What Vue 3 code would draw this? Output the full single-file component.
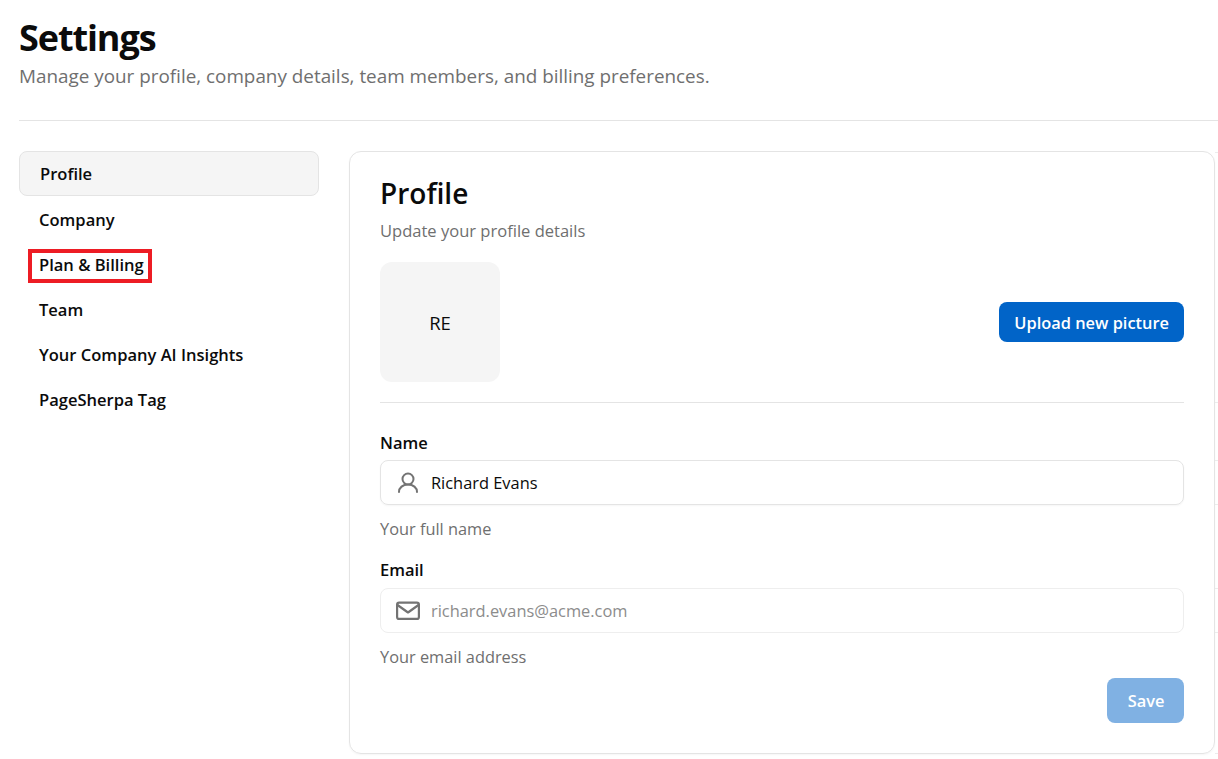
<template>
  <div class="page">
    <header class="head">
      <h1>Settings</h1>
      <p>Manage your profile, company details, team members, and billing preferences.</p>
    </header>

    <div class="body">
      <nav class="side">
        <a
          v-for="item in navItems"
          :key="item"
          class="nav-item"
          :class="{ active: item === 'Profile' }"
        >
          <span :class="{ marked: item === 'Plan & Billing' }">{{ item }}</span>
        </a>
      </nav>

      <section class="card">
        <h2>Profile</h2>
        <p class="lead">Update your profile details</p>

        <div class="avatar-row">
          <div class="avatar">RE</div>
          <button class="btn">Upload new picture</button>
        </div>

        <div class="field">
          <label>Name</label>
          <div class="input">
            <svg class="icon" width="24" height="24" viewBox="0 0 24 24" fill="none" stroke="#737373" stroke-width="2" stroke-linecap="round">
              <circle cx="12" cy="8" r="5.500" />
              <path d="M3 21c0-4.300 3.800-7.500 9-7.500s9 3.200 9 7.500" />
            </svg>
            <span>Richard Evans</span>
          </div>
          <p class="help">Your full name</p>
        </div>

        <div class="field">
          <label>Email</label>
          <div class="input disabled">
            <svg class="icon" width="24" height="24" viewBox="0 0 24 24" fill="none" stroke="#737373" stroke-width="2.200" stroke-linejoin="round">
              <rect x="1.100" y="3.600" width="21.800" height="16.300" rx="2" />
              <path d="M1.500 6l10.500 7.500L22.500 6" />
            </svg>
            <span>richard.evans@acme.com</span>
          </div>
          <p class="help">Your email address</p>
        </div>

        <div class="actions">
          <button class="btn save">Save</button>
        </div>
      </section>
    </div>

    <!-- stubs of a clipped layer showing past the card's right edge -->
    <i v-for="y in edgeTicks" :key="y" class="tick" :style="{ top: y + 'px' }"></i>
  </div>
</template>

<script setup>
const navItems = [
  "Profile",
  "Company",
  "Plan & Billing",
  "Team",
  "Your Company AI Insights",
  "PageSherpa Tag",
];

const edgeTicks = [152, 402, 460, 504, 588, 632, 753];
</script>

<style>
html,
body {
  background: #fff;
  overflow: hidden;
}
</style>

<style scoped>
.page {
  position: relative;
  height: 759px;
  box-sizing: border-box;
  padding: 13px 0 0 19px;
  font-family: "Open Sans", "Noto Sans", sans-serif;
  color: #0b0b0b;
}

.head {
  height: 108px;
  box-sizing: border-box;
  border-bottom: 1px solid #e4e4e4;
}

h1 {
  margin: 0;
  font-size: 36px;
  line-height: 49px;
  font-weight: 700;
  letter-spacing: -1.1px;
}

.head p {
  margin: 0;
  font-size: 18.88px;
  line-height: 28px;
  color: #6f6f6f;
}

.body {
  display: flex;
  gap: 30px;
  padding-top: 30px;
}

.side {
  width: 300px;
  display: flex;
  flex-direction: column;
  flex-shrink: 0;
}

.nav-item {
  height: 45px;
  display: flex;
  align-items: center;
  padding-left: 20px;
  font-size: 16.55px;
  font-weight: 600;
  box-sizing: border-box;
}

.nav-item.active {
  background: #f5f5f5;
  border: 1px solid #e4e4e4;
  border-radius: 8px;
  margin-bottom: 1px;
}

.marked {
  outline: 4px solid #ed1c24;
  padding: 1px 4px 3px 7px;
  margin: 3px 0 0 -7px;
  line-height: 22px;
}

.card {
  width: 866px;
  height: 603px;
  box-sizing: border-box;
  padding: 20px 30px 0;
  border: 1px solid #e4e4e4;
  border-radius: 12px;
  box-shadow: 0 1px 2px rgba(0, 0, 0, 0.04);
}

h2 {
  margin: 0;
  font-size: 28px;
  line-height: 42px;
  font-weight: 600;
}

.lead {
  margin: 5px 0 0;
  font-size: 16.55px;
  line-height: 24px;
  color: #6f6f6f;
}

.avatar-row {
  margin-top: 19px;
  padding-bottom: 20px;
  border-bottom: 1px solid #e4e4e4;
  display: flex;
  align-items: center;
  justify-content: space-between;
}

.avatar {
  width: 120px;
  height: 120px;
  border-radius: 12px;
  background: #f5f5f5;
  display: flex;
  align-items: center;
  justify-content: center;
  font-size: 18.5px;
}

.btn {
  height: 40px;
  padding: 0 15px;
  border: 0;
  border-radius: 8px;
  background: #0164c8;
  color: #fff;
  font: 600 16.4px "Open Sans", "Noto Sans", sans-serif;
}

.field {
  margin-top: 27px;
}

.field + .field {
  margin-top: 16px;
}

label {
  display: block;
  font-size: 16.5px;
  font-weight: 600;
  line-height: 26px;
}

.input {
  height: 45px;
  margin-top: 4px;
  box-sizing: border-box;
  display: flex;
  align-items: center;
  gap: 11px;
  padding-left: 15px;
  border: 1px solid #e4e4e4;
  border-radius: 8px;
  font-size: 16.4px;
  box-shadow: 0 1px 2px rgba(0, 0, 0, 0.04);
}

.field + .field .input {
  margin-top: 5px;
}

.input.disabled {
  border-color: #eeeeee;
  color: #8c8c8c;
  box-shadow: none;
}

.help {
  margin: 12px 0 0;
  font-size: 16.35px;
  line-height: 24px;
  color: #6f6f6f;
}

.actions {
  display: flex;
  justify-content: flex-end;
  margin-top: 9px;
}

.save {
  height: 45px;
  width: 77px;
  padding: 0 0 0 1px;
  background: #80b1e3;
}

.tick {
  position: absolute;
  left: 1215px;
  width: 3px;
  height: 1px;
  background: #ececec;
}
</style>
